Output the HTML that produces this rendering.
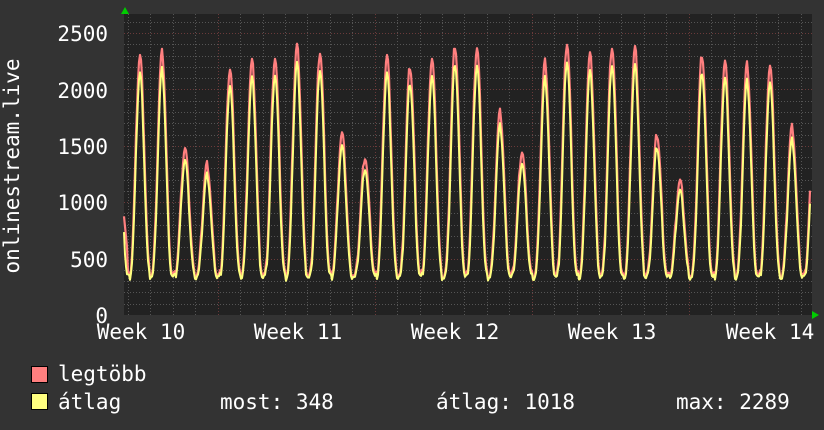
<!DOCTYPE html>
<html><head><meta charset="utf-8"><style>
html,body{margin:0;padding:0;background:#333;}
svg{display:block}
text{font-family:"DejaVu Sans Mono","Liberation Mono",monospace;fill:#fff;}
</style></head><body>
<svg id="s" width="824" height="430" xmlns="http://www.w3.org/2000/svg">
<rect width="824" height="430" fill="#333"/>
<rect x="124" y="14" width="688" height="301" fill="#222"/>
<g id="grid"></g>
<polyline id="red" fill="none" stroke="#ff7f7f" stroke-width="2.2" stroke-linejoin="round"/>
<polyline id="yel" fill="none" stroke="#ffff7f" stroke-width="2" stroke-linejoin="round"/>
<polygon points="121,14 129,14 125,7" fill="#0c0"/>
<polygon points="812,311 812,319 819,315" fill="#0c0"/>
<g font-size="21" text-anchor="end">
<text x="108" y="41">2500</text><text x="108" y="98">2000</text><text x="108" y="154">1500</text>
<text x="108" y="210">1000</text><text x="108" y="267">500</text><text x="108" y="323">0</text>
</g>
<g font-size="21" text-anchor="middle">
<text x="141" y="339">Week 10</text><text x="298" y="339">Week 11</text><text x="455" y="339">Week 12</text>
<text x="612" y="339">Week 13</text><text x="770" y="339">Week 14</text>
</g>
<text font-size="21" transform="translate(19,166) rotate(-90)" text-anchor="middle">onlinestream.live</text>
<rect x="31.5" y="366.5" width="16" height="16" fill="#ff7f7f" stroke="#000"/>
<rect x="31.5" y="393.5" width="16" height="16" fill="#ffff7f" stroke="#000"/>
<g font-size="21">
<text x="58" y="381">legtöbb</text>
<text x="58" y="409">átlag</text>
<text x="220" y="409">most: 348</text>
<text x="436" y="409">átlag: 1018</text>
<text x="676" y="409">max: 2289</text>
</g>
</svg>
<script>
var ns="http://www.w3.org/2000/svg",g=document.getElementById('grid');
function ln(x1,y1,x2,y2,c){var l=document.createElementNS(ns,'line');l.setAttribute('x1',x1);l.setAttribute('y1',y1);l.setAttribute('x2',x2);l.setAttribute('y2',y2);l.setAttribute('stroke',c);l.setAttribute('stroke-width',1);l.setAttribute('stroke-dasharray','1,2');g.appendChild(l);}
function Y(v){return 315-v*282/2500;}
for(var v=100;v<=2700;v+=100){var y=Math.round(Y(v))+.5;if(y<14)break;ln(124,y,812,y,v%500==0?'#6a3a3a':'#555');}
for(var x=128;x<812;x+=22.43){var xx=Math.round(x)+.5;var maj=Math.abs(((x-218)/157)-Math.round((x-218)/157))<0.03;ln(xx,14,xx,315,maj?'#6a3a3a':'#555');}
var px=[140,162,185,207,230,252,275,297,320,342,365,387,410,432,455,477,500,522,545,567,590,612,635,657,680,702,725,747,770,792];
var ph=[2300,2330,1480,1340,2180,2250,2280,2390,2330,1610,1400,2300,2200,2270,2390,2370,1800,1450,2250,2410,2310,2380,2370,1600,1190,2310,2250,2220,2210,1670];
var r=[],yl=[];
for(var x=124;x<=810;x+=1){
 var k=0,d=1e9;for(var i=0;i<px.length;i++){var dd=Math.abs(x-px[i]);if(dd<d){d=dd;k=i;}}
 var t=(x-px[k])/22.4*Math.PI*2;var c=Math.max(0,(1+Math.cos(t))/2);
 var base=340+((x*37)%23);var v=base+(ph[k]-base)*Math.pow(c,1.4);
 if(x<128)v=900-(x-124)*100;
 var n=((x*7919)%13)-6;
 r.push(x+','+Y(v+n*5).toFixed(1));
 var va=base-15+(ph[k]*0.94-base)*Math.pow(c,1.55);
 yl.push(x+','+Y(va+n*4).toFixed(1));
}
document.getElementById('red').setAttribute('points',r.join(' '));
document.getElementById('yel').setAttribute('points',yl.join(' '));
</script>
</body></html>
